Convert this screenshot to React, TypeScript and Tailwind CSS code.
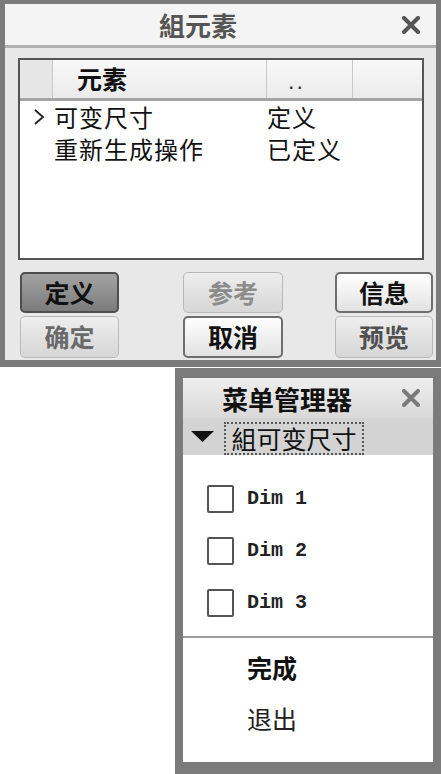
import React from "react";

const cjk = "font-['Noto_Sans_CJK_SC',sans-serif]";

function XMark({ color }: { color: string }) {
  return (
    <svg width="18" height="18" viewBox="0 0 18 18">
      <path d="M2 2 L16 16 M16 2 L2 16" stroke={color} strokeWidth="4" strokeLinecap="round" />
    </svg>
  );
}

type BtnProps = { label: string; kind: "pressed" | "disabled" | "normal"; tone?: string; w: string };

function DlgButton({ label, kind, tone, w }: BtnProps) {
  const base = `${w} h-full rounded-[5px] flex items-center justify-center text-[25px] font-bold ${cjk}`;
  if (kind === "pressed")
    return <div className={`${base} border-2 border-[#4e4e4e] bg-gradient-to-b from-[#a3a3a3] to-[#7c7c7c] text-[#111]`}>{label}</div>;
  if (kind === "disabled")
    return <div className={`${base} border border-[#b9b9b9] bg-gradient-to-b from-[#eeeeee] to-[#d6d6d6] ${tone}`}>{label}</div>;
  return <div className={`${base} border-2 border-[#6e6e6e] bg-gradient-to-b from-[#ffffff] to-[#e2e2e2] text-[#111]`}>{label}</div>;
}

export default function App() {
  return (
    <div className="w-[441px] h-[774px] bg-white overflow-hidden flex flex-col">
      {/* group elements dialog */}
      <div className="h-[367px] border-[#7b7b7b] border-t-[4px] border-l-[5px] border-r-[5px] border-b-[7px] bg-[#e8e8e8] flex flex-col">
        <div className="h-[41px] bg-[#f4f4f4] flex items-center">
          <span className={`flex-1 text-center pr-[11px] text-[26px] font-bold text-[#555] ${cjk}`}>組元素</span>
          <div className="mr-[16px] flex"><XMark color="#555" /></div>
        </div>
        <div className="h-[3px] bg-[#b0b0b0]" />

        <div className="flex-1 pt-[10px] flex flex-col">
          <div className="ml-[13px] mr-[12px] h-[202px] border-2 border-[#555] bg-white flex flex-col">
            <div className="h-[41px] flex border-b-[3px] border-[#a5a5a5] bg-gradient-to-b from-[#f8f8f8] to-[#ebebeb]">
              <div className="w-[32px] bg-[#e6e6e6]" />
              <div className={`w-[214px] border-l border-[#c9c9c9] flex items-end pb-[1px] pl-[24px] text-[25px] font-bold text-[#111] ${cjk}`}>元素</div>
              <div className="w-[86px] border-l border-[#c9c9c9] flex items-end pl-[22px] pb-[2px] text-[16px] font-bold text-[#333] font-['Liberation_Sans',sans-serif] tracking-[4px]">..</div>
              <div className="flex-1 border-l border-[#c9c9c9]" />
            </div>
            <div className={`flex flex-col text-[24px] tracking-[1px] text-[#111] ${cjk}`}>
              <div className="h-[32px] flex items-center">
                <div className="w-[34px] flex justify-center pl-[4px]">
                  <svg width="12" height="16" viewBox="0 0 12 16">
                    <path d="M2 1 L10 8 L2 15" stroke="#222" strokeWidth="1.8" fill="none" />
                  </svg>
                </div>
                <span className="w-[213px]">可变尺寸</span>
                <span>定义</span>
              </div>
              <div className="h-[32px] flex items-center">
                <div className="w-[34px]" />
                <span className="w-[213px]">重新生成操作</span>
                <span>已定义</span>
              </div>
            </div>
          </div>

          <div className="mt-[12px] flex flex-col gap-[3px]">
            <div className="h-[41px] flex pl-[15px]">
              <DlgButton label="定义" kind="pressed" w="w-[99px]" />
              <div className="w-[64px]" />
              <DlgButton label="参考" kind="disabled" tone="text-[#8c8c8c]" w="w-[100px]" />
              <div className="w-[52px]" />
              <DlgButton label="信息" kind="normal" w="w-[98px]" />
            </div>
            <div className="h-[42px] flex pl-[15px]">
              <DlgButton label="确定" kind="disabled" tone="text-[#6a6a6a]" w="w-[99px]" />
              <div className="w-[64px]" />
              <DlgButton label="取消" kind="normal" w="w-[100px]" />
              <div className="w-[52px]" />
              <DlgButton label="预览" kind="disabled" tone="text-[#505050]" w="w-[98px]" />
            </div>
          </div>
        </div>
      </div>

      {/* menu manager */}
      <div className="ml-[175px] mt-[1px] w-[266px] h-[406px] border-[#7b7b7b] border-t-[10px] border-l-[8px] border-r-[8px] border-b-[12px] flex flex-col">
        <div className="h-[40px] bg-gradient-to-b from-[#eeeeee] to-[#d9d9d9] flex items-center">
          <span className={`flex-1 text-center pr-[11px] text-[26px] font-bold text-[#111] ${cjk}`}>菜单管理器</span>
          <div className="mr-[13px] flex"><XMark color="#7a7a7a" /></div>
        </div>
        <div className="h-[37px] bg-[#d3d3d3] flex items-end">
          <div className="ml-[7px] self-center flex">
            <svg width="25" height="13" viewBox="0 0 25 13">
              <path d="M1 1 L24 1 L12.5 12 Z" fill="#111" />
            </svg>
          </div>
          <div className={`ml-[9px] h-[33px] w-[140px] border-2 border-dotted border-[#555] flex items-center justify-center text-[25px] text-[#111] ${cjk}`}>組可变尺寸</div>
        </div>
        <div className="flex-1 bg-white flex flex-col">
          <div className="pt-[30px] flex flex-col">
            {["Dim 1", "Dim 2", "Dim 3"].map((d, i) => (
              <div key={d} className={`h-[28px] flex items-center pl-[24px] ${i === 0 ? "" : "mt-[24px]"}`}>
                <div className="w-[27px] h-[28px] border-2 border-[#555] rounded-[2px] bg-white" />
                <span className="ml-[13px] text-[20px] font-bold text-[#222] font-['Liberation_Mono',monospace]">{d}</span>
              </div>
            ))}
          </div>
          <div className="mt-[19px] h-[2px] bg-[#9c9c9c]" />
          <div className={`mt-[10px] h-[40px] flex items-center pl-[64px] text-[25px] font-bold text-[#111] ${cjk}`}>完成</div>
          <div className={`mt-[11px] h-[40px] flex items-center pl-[64px] text-[25px] text-[#222] ${cjk}`}>退出</div>
        </div>
      </div>
    </div>
  );
}
